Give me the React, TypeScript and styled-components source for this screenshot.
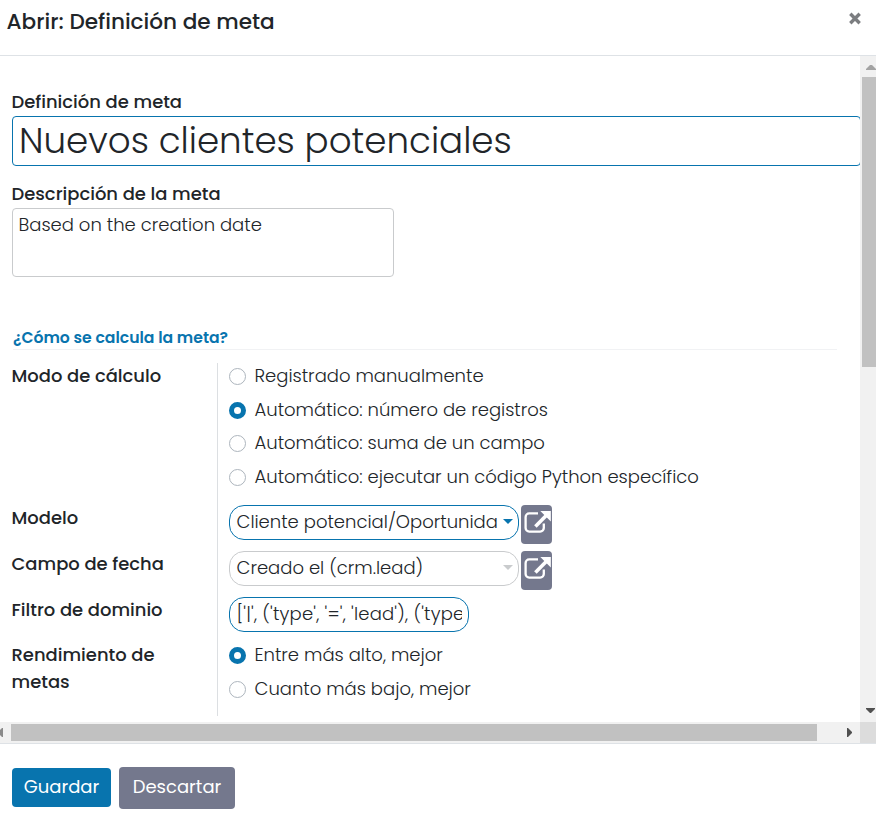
import React from "react";
import styled, { createGlobalStyle } from "styled-components";

const blue = "#0874ae";
const slate = "#74788d";

const GlobalStyle = createGlobalStyle`
  * { box-sizing: border-box; }
  body {
    margin: 0;
    background: #fff;
    color: #212529;
    font-family: Poppins, Inter, sans-serif;
    font-size: 18px;
    overflow: hidden;
  }
`;

const Dialog = styled.div`
  display: grid;
  grid-template-rows: 56px 687px 78px;
  width: 876px;
  height: 821px;
  overflow: hidden;
`;

const Header = styled.header`
  display: flex;
  justify-content: space-between;
  align-items: flex-start;
  padding: 6px 15px 0 6.5px;
  border-bottom: 1px solid #dee2e6;
`;

const Title = styled.h4`
  margin: 0;
  font-size: 21.6px;
  font-weight: 500;
  line-height: 31px;
`;

const CloseButton = styled.button`
  display: flex;
  padding: 0;
  margin-top: 6px;
  border: 0;
  background: none;
`;

const ScrollArea = styled.div`
  display: grid;
  grid-template-columns: 860px 16px;
  grid-template-rows: 666px 21px;
`;

const Sheet = styled.main`
  padding: 33px 0 0 12px;
  overflow: hidden;
`;

const Label = styled.label`
  display: block;
  margin: -1px 0 1px -0.5px;
  font-size: 17.95px;
  font-weight: 500;
  line-height: 27px;
`;

const NameInput = styled.div`
  width: 849px;
  height: 50px;
  margin: 0 0 15px;
  padding-left: 6px;
  border: 1px solid ${blue};
  border-radius: 4px;
  font-size: 35.7px;
  font-weight: 300;
  line-height: 48px;
`;

const Description = styled.div`
  width: 382px;
  height: 69px;
  padding: 2px 0 0 5.5px;
  border: 1px solid #c9cbcd;
  border-radius: 4px;
  font-weight: 300;
  line-height: 27px;
`;

const SectionTitle = styled.h2`
  width: 824px;
  height: 26px;
  margin: 47px 0 13px 1px;
  border-bottom: 1px solid #f1f2f4;
  color: ${blue};
  font-size: 15.65px;
  font-weight: 600;
  line-height: 27px;
`;

const Group = styled.section`
  display: grid;
  grid-template-columns: 205px 1fr;
  height: 353px;
`;

const LabelColumn = styled.div`
  display: grid;
  grid-template-rows: 142px 46px 46px 45px 74px;
`;

const FieldColumn = styled(LabelColumn)`
  padding-left: 11px;
  border-left: 1px solid #dcdfe2;
`;

const RadioList = styled.div`
  display: flex;
  flex-direction: column;
  gap: 6.6px;
  font-weight: 300;
`;

const RadioRow = styled.label`
  display: flex;
  align-items: center;
  gap: 8.5px;
  height: 27px;
`;

const RadioText = styled.span`
  line-height: 27px;
  margin-bottom: 2px;
`;

const Dot = styled.span<{ $checked?: boolean }>`
  width: 17px;
  height: 17px;
  border: ${(p) => (p.$checked ? `5.5px solid ${blue}` : "1px solid #adb5bd")};
  border-radius: 50%;
  background: #fff;
`;

const FieldRow = styled.div`
  display: flex;
  align-items: flex-start;
  gap: 2px;
`;

const Pill = styled.div<{ $w: number; $active?: boolean }>`
  display: flex;
  align-items: center;
  justify-content: space-between;
  width: ${(p) => p.$w}px;
  height: 35px;
  padding: 0 6px 2px 6.5px;
  border: 1px solid ${(p) => (p.$active ? blue : "#c9cbcd")};
  border-radius: 15px;
  font-weight: 300;
  line-height: 33px;
  white-space: pre;
`;

const DomainText = styled.div`
  overflow: hidden;
  letter-spacing: 0.2px;
`;

const Caret = styled.i<{ $active?: boolean }>`
  flex: none;
  margin-right: -1px;
  border: solid transparent;
  border-width: 5px 5px 0;
  border-top-color: ${(p) => (p.$active ? blue : "#c9cbcd")};
`;

const OpenButton = styled.button`
  display: flex;
  width: 31px;
  height: 39px;
  padding: 0;
  border: 0;
  border-radius: 4px;
  background: ${slate};
`;

const VerticalTrack = styled.div`
  display: flex;
  flex-direction: column;
  align-items: flex-end;
  background: #f1f1f1;
`;

const VerticalThumb = styled.div`
  width: 14px;
  height: 290px;
  margin-bottom: auto;
  background: #c1c1c1;
`;

const HorizontalTrack = styled.div`
  display: flex;
  align-items: center;
  background: #f1f1f1;
`;

const HorizontalThumb = styled.div`
  width: 806px;
  height: 17px;
  background: #c1c1c1;
`;

const Corner = styled.div`
  background: #dcdcdc;
`;

const Footer = styled.footer`
  display: flex;
  align-items: center;
  gap: 8px;
  padding: 12px 0 2px 12px;
  border-top: 1px solid #dee2e6;
`;

const Action = styled.button<{ $w: number; $h: number; $bg: string }>`
  width: ${(p) => p.$w}px;
  height: ${(p) => p.$h}px;
  padding: 0 0 2px;
  border: 0;
  border-radius: 4px;
  background: ${(p) => p.$bg};
  color: #fff;
  font: inherit;
  line-height: 27px;
`;

const OpenIcon = () => (
  <svg width="31" height="39" viewBox="0 0 31 39" fill="none" stroke="#fff">
    <path d="M17 8.4H8.2a3.6 3.6 0 0 0-3.6 3.6v11a3.6 3.6 0 0 0 3.6 3.6h11a3.6 3.6 0 0 0 3.6-3.6V18.5" strokeWidth="2.3" />
    <path d="M14.4 21.4 26 9.8" strokeWidth="3.6" />
    <path d="M19.3 5.9h10.5v10.5z" fill="#fff" stroke="none" />
  </svg>
);

const ArrowIcon = ({ w, h, d, color }: { w: number; h: number; d: string; color: string }) => (
  <svg width={w} height={h} viewBox={`0 0 ${w} ${h}`}>
    <path d={d} fill={color} />
  </svg>
);

const Radio = ({ text, checked }: { text: string; checked?: boolean }) => (
  <RadioRow>
    <Dot $checked={checked} />
    <RadioText>{text}</RadioText>
  </RadioRow>
);

export default function App() {
  return (
    <>
      <GlobalStyle />
      <Dialog>
        <Header>
          <Title>Abrir: Definición de meta</Title>
          <CloseButton aria-label="Cerrar">
            <svg width="12" height="13" viewBox="0 0 12 13" stroke="#7b7d80" strokeWidth="3.4">
              <path d="M1.3 1.8 10.7 11.2M10.7 1.8 1.3 11.2" />
            </svg>
          </CloseButton>
        </Header>
        <ScrollArea>
          <Sheet>
            <Label>Definición de meta</Label>
            <NameInput>Nuevos clientes potenciales</NameInput>
            <Label>Descripción de la meta</Label>
            <Description>Based on the creation date</Description>
            <SectionTitle>¿Cómo se calcula la meta?</SectionTitle>
            <Group>
              <LabelColumn>
                <Label>Modo de cálculo</Label>
                <Label>Modelo</Label>
                <Label>Campo de fecha</Label>
                <Label>Filtro de dominio</Label>
                <Label>
                  Rendimiento de
                  <br />
                  metas
                </Label>
              </LabelColumn>
              <FieldColumn>
                <RadioList>
                  <Radio text="Registrado manualmente" />
                  <Radio text="Automático: número de registros" checked />
                  <Radio text="Automático: suma de un campo" />
                  <Radio text="Automático: ejecutar un código Python específico" />
                </RadioList>
                <FieldRow>
                  <Pill $w={290} $active>
                    Cliente potencial/Oportunida
                    <Caret $active />
                  </Pill>
                  <OpenButton aria-label="Abrir modelo"><OpenIcon /></OpenButton>
                </FieldRow>
                <FieldRow>
                  <Pill $w={290}>
                    Creado el (crm.lead)
                    <Caret />
                  </Pill>
                  <OpenButton aria-label="Abrir campo"><OpenIcon /></OpenButton>
                </FieldRow>
                <FieldRow>
                  <Pill $w={240} $active>
                    <DomainText>['|', ('type', '=', 'lead'), ('type</DomainText>
                  </Pill>
                </FieldRow>
                <RadioList>
                  <Radio text="Entre más alto, mejor" checked />
                  <Radio text="Cuanto más bajo, mejor" />
                </RadioList>
              </FieldColumn>
            </Group>
          </Sheet>
          <VerticalTrack>
            <ArrowIcon w={16} h={21} d="M6 14h10v-1l-4-4h-2l-4 4z" color="#a3a3a3" />
            <VerticalThumb />
            <ArrowIcon w={16} h={21} d="M6 7h9v1l-4 4h-1l-4-4z" color="#505050" />
          </VerticalTrack>
          <HorizontalTrack>
            <ArrowIcon w={11} h={21} d="M3 6v9H2L0 13V8l2-2z" color="#8a8a8a" />
            <HorizontalThumb />
            <ArrowIcon w={43} h={21} d="M30 6h1l4 4v1l-4 4h-1z" color="#505050" />
          </HorizontalTrack>
          <Corner />
        </ScrollArea>
        <Footer>
          <Action $w={99} $h={39} $bg={blue}>Guardar</Action>
          <Action $w={116} $h={42} $bg={slate}>Descartar</Action>
        </Footer>
      </Dialog>
    </>
  );
}
